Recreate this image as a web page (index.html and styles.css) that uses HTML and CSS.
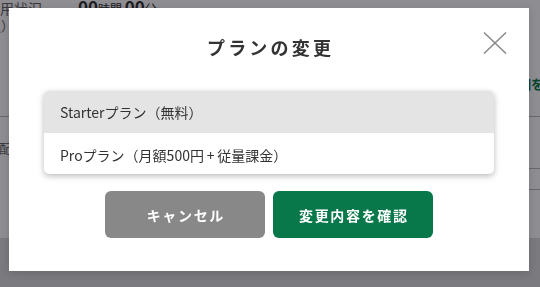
FILE: index.html
```html
<!DOCTYPE html>
<html lang="ja">
<head>
<meta charset="utf-8">
<title>プランの変更</title>
<link rel="stylesheet" href="styles.css">
</head>
<body>
<div class="page">
  <div class="usage-row">
    <span class="usage-label">利用状況</span>
    <span class="usage-value"><b>00</b>時間 <b>00</b>分</span>
  </div>
  <div class="tax-row">（税込）</div>
  <div class="link-row"><a class="link">詳細を確認</a></div>
  <div class="rule"></div>
  <div class="plan-row">メール配信</div>
  <div class="rule rule-short"></div>
  <div class="rule rule-short rule-second"></div>
</div>
<div class="footer"></div>

<div class="overlay">
  <div class="modal" role="dialog" aria-labelledby="modal-title">
    <h2 class="modal-title" id="modal-title">プランの変更</h2>
    <button class="close-btn" aria-label="閉じる">
      <svg width="24" height="22" viewBox="0 0 24 22"><path d="M1 0.5 L23 21.5 M23 0.5 L1 21.5" stroke="#8a8a8a" stroke-width="1.5" fill="none"/></svg>
    </button>
    <ul class="plan-list">
      <li class="plan-item is-active">Starterプラン（無料）</li>
      <li class="plan-item">Proプラン（月額500円&#8201;+&#8201;従量課金）</li>
    </ul>
    <div class="actions">
      <button class="btn btn-cancel">キャンセル</button>
      <button class="btn btn-confirm">変更内容を確認</button>
    </div>
  </div>
</div>
</body>
</html>
```

FILE: styles.css
```css
* { box-sizing: border-box; }
html, body {
  margin: 0;
  padding: 0;
  width: 540px;
  height: 287px;
  overflow: hidden;
  font-family: "Noto Sans CJK JP", "Noto Sans", sans-serif;
  color: #333;
  background: #dcdcdd;
}
.page {
  background: #fff;
  height: 238px;
  overflow: hidden;
}
.footer { height: 49px; background: #dcdcdd; }

.usage-row {
  display: flex;
  align-items: baseline;
  margin-top: -6px;
  height: 22px;
}
.usage-label {
  margin-left: -14px;
  font-size: 14px;
  color: #666;
  width: 92px;
}
.usage-value { font-size: 12px; color: #333; }
.usage-value b { font-size: 17px; font-weight: 700; }
.tax-row {
  margin-left: -38px;
  font-size: 13px;
  color: #666;
  height: 20px;
  line-height: 20px;
}
.link-row {
  display: flex;
  justify-content: flex-end;
  margin-right: -30px;
  margin-top: 38px;
  height: 30px;
}
.link {
  font-size: 13px;
  font-weight: 700;
  color: #0a7a4c;
}
.rule { height: 1px; background: #bbb; margin-top: 12px; }
.plan-row {
  margin-left: -40px;
  margin-top: 21px;
  font-size: 13px;
  line-height: 20px;
  color: #666;
  height: 20px;
}
.rule-short { margin-left: 300px; margin-top: 10px; }
.rule-second { margin-top: 20px; }

.overlay {
  position: fixed;
  inset: 0;
  background: rgba(4, 2, 11, 0.45);
  display: flex;
  align-items: flex-start;
  padding: 8px 0 0 9px;
}
.modal {
  position: relative;
  width: 520px;
  background: #fff;
  padding: 26px 35px 33px;
  box-shadow: 0 2px 8px rgba(0,0,0,0.15);
}
.modal-title {
  margin: 0;
  text-align: center;
  font-size: 18px;
  line-height: 26px;
  font-weight: 700;
  letter-spacing: 0.18em;
  padding-left: 0.18em;
  color: #333;
}
.close-btn {
  position: absolute;
  top: 24px;
  right: 22px;
  width: 24px;
  height: 22px;
  padding: 0;
  border: 0;
  background: none;
  display: block;
}
.close-btn svg { display: block; }

.plan-list {
  list-style: none;
  margin: 31px 0 0;
  padding: 0;
  border-radius: 5px;
  overflow: hidden;
  background: #fff;
  box-shadow: 0 2px 6px rgba(0,0,0,0.28);
}
.plan-item {
  height: 42px;
  line-height: 42px;
  padding: 0 16px;
  font-size: 14px;
  color: #333;
}
.plan-item + .plan-item { height: 41px; line-height: 38px; padding-top: 3px; }
.plan-item.is-active { background: #e4e4e4; }

.actions {
  display: flex;
  justify-content: center;
  gap: 8px;
  margin-top: 17px;
}
.btn {
  width: 160px;
  height: 47px;
  border: 0;
  border-radius: 6px;
  color: #fff;
  font-family: inherit;
  font-size: 14px;
  font-weight: 700;
  letter-spacing: 0.12em;
  padding: 0 0 0 0.12em;
}
.btn-cancel { background: #888888; }
.btn-confirm { background: #08784a; }
```
